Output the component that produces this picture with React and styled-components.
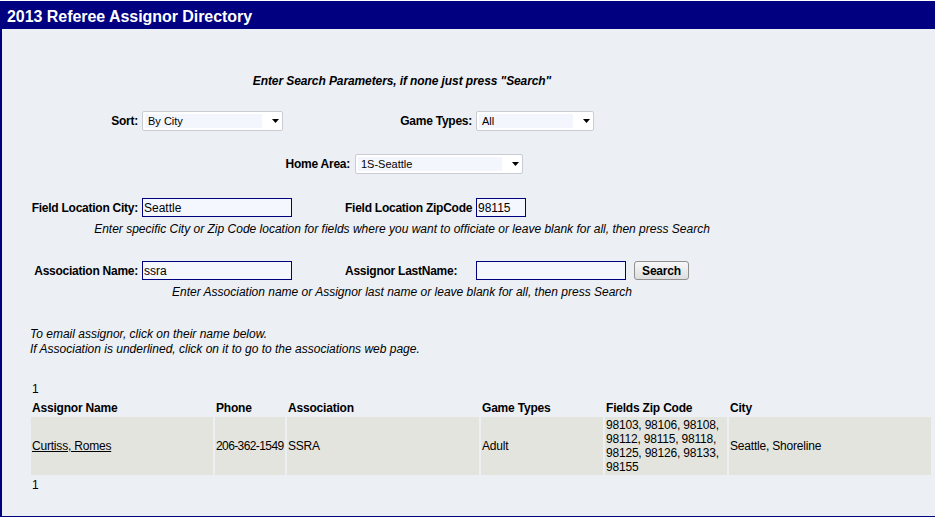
import React from "react";
import styled, { createGlobalStyle } from "styled-components";

const GlobalStyle = createGlobalStyle`
  html, body { margin: 0; padding: 0; overflow: hidden; background: #ffffff; }
  body { padding-top: 1px; font-family: "Liberation Sans", Arial, sans-serif; font-size: 12px; color: #000; }
`;

const resultados = [
  {
    nombre: "Curtiss, Romes",
    telefono: "206-362-1549",
    asociacion: "SSRA",
    tipos: "Adult",
    zips: "98103, 98106, 98108, 98112, 98115, 98118, 98125, 98126, 98133, 98155",
    ciudad: "Seattle, Shoreline",
  },
];

const Select = ({ value, width }) => (
  <SelectBox $width={width}>
    <SelectValue>{value}</SelectValue>
    <SelectArrow>
      <svg width="7" height="4" viewBox="0 0 7 4"><path d="M0 0h7L3.5 4z" fill="#000" /></svg>
    </SelectArrow>
  </SelectBox>
);

const App = () => {
  return (
    <>
      <GlobalStyle />
      <Panel>
        <Header>2013 Referee Assignor Directory</Header>
        <Form>
          <Heading>Enter Search Parameters, if none just press "Search"</Heading>

          <Row $cols="112px 141px 193px 118px" $top={23}>
            <Label $align="right">Sort:</Label>
            <Select value="By City" width={141} />
            <Label $align="right">Game Types:</Label>
            <Select value="All" width={118} />
          </Row>

          <Row $cols="70px 168px" $pad={283} $top={23}>
            <Label $align="right" $gap={5}>Home Area:</Label>
            <Select value="1S-Seattle" width={168} />
          </Row>

          <Row $cols="112px 150px 53px 131px 50px" $top={24}>
            <Label $align="right">Field Location City:</Label>
            <Input defaultValue="Seattle" $width={150} />
            <span />
            <Label>Field Location ZipCode</Label>
            <Input defaultValue="98115" $width={50} />
          </Row>
          <Hint $top={5}>
            Enter specific City or Zip Code location for fields where you want to officiate or leave blank for all, then press Search
          </Hint>

          <Row $cols="112px 150px 53px 131px 150px 8px 55px" $top={25}>
            <Label $align="right">Association Name:</Label>
            <Input defaultValue="ssra" $width={150} />
            <span />
            <Label>Assignor LastName:</Label>
            <Input defaultValue="" $width={150} />
            <span />
            <SearchButton type="button">Search</SearchButton>
          </Row>
          <Hint $top={5}>
            Enter Association name or Assignor last name or leave blank for all, then press Search
          </Hint>
        </Form>

        <Notes>
          To email assignor, click on their name below.<br />
          If Association is underlined, click on it to go to the associations web page.
        </Notes>

        <Table>
          <colgroup>
            <col style={{ width: 182 }} />
            <col style={{ width: 70 }} />
            <col style={{ width: 192 }} />
            <col style={{ width: 122 }} />
            <col style={{ width: 122 }} />
            <col style={{ width: 202 }} />
          </colgroup>
          <tbody>
            <tr><Pager colSpan={6}>1</Pager></tr>
            <tr>
              <Th>Assignor Name</Th>
              <Th>Phone</Th>
              <Th>Association</Th>
              <Th>Game Types</Th>
              <Th>Fields Zip Code</Th>
              <Th>City</Th>
            </tr>
            {resultados.map((r) => (
              <tr key={r.nombre}>
                <Td><NameLink href="#">{r.nombre}</NameLink></Td>
                <Td $nowrap>{r.telefono}</Td>
                <Td>{r.asociacion}</Td>
                <Td>{r.tipos}</Td>
                <Td>{r.zips}</Td>
                <Td>{r.ciudad}</Td>
              </tr>
            ))}
            <tr><Pager colSpan={6}>1</Pager></tr>
          </tbody>
        </Table>
      </Panel>
    </>
  );
};

export default App;

// --- Estilos ---
const Panel = styled.div`
  width: 960px; background: #eceff4;
  border: 2px solid #000080; border-top: none;
  padding-bottom: 21px;
`;

const Header = styled.div`
  height: 28px; background: #000080; color: #fff;
  font-size: 16px; font-weight: 700; line-height: 31px;
  padding-left: 7px; margin: 0 -2px;
  letter-spacing: -0.05px;
`;

const Form = styled.div` width: 800px; `;

const Heading = styled.div`
  margin-top: 45px; text-align: center;
  font-weight: 700; font-style: italic; line-height: 14px;
  letter-spacing: -0.1px;
`;

const Row = styled.div`
  display: grid; grid-template-columns: ${(p) => p.$cols};
  align-items: center; margin-top: ${(p) => p.$top}px;
  padding-left: ${(p) => (p.$pad ?? 28)}px;
`;

const Label = styled.span`
  font-weight: 700; white-space: nowrap; letter-spacing: -0.25px;
  text-align: ${(p) => p.$align || "left"};
  padding-right: ${(p) => (p.$align === "right" ? p.$gap ?? 4 : 0)}px;
`;

const SelectBox = styled.div`
  box-sizing: border-box; width: ${(p) => p.$width}px; height: 20px;
  display: flex; align-items: center;
  border: 1px solid #c9ccd2; border-radius: 2px; background: #fff;
  padding: 2px;
`;

const SelectValue = styled.span`
  flex: 1; height: 14px; line-height: 14px; font-size: 11px;
  background: #f4f6fd; padding-left: 3px;
`;

const SelectArrow = styled.span`
  width: 18px; display: flex; justify-content: flex-end; align-items: center;
  padding-right: 1px; box-sizing: border-box;
`;

const Input = styled.input`
  box-sizing: border-box; width: ${(p) => p.$width}px; height: 19px;
  border: 1px solid #000080; background: #f5f7fe; padding: 0 1px;
  font-family: "Liberation Sans", Arial, sans-serif; font-size: 12px; color: #000;
  outline: none;
`;

const SearchButton = styled.button`
  box-sizing: border-box; width: 55px; height: 19px; padding: 0;
  border: 1px solid #8f8f8f; border-radius: 3px;
  background: linear-gradient(#f7f7f7, #dedede);
  font-family: "Liberation Sans", Arial, sans-serif; font-size: 12px; font-weight: 700; color: #000;
  letter-spacing: -0.2px;
`;

const Hint = styled.div`
  margin-top: ${(p) => p.$top}px; text-align: center;
  font-style: italic; line-height: 14px;
`;

const Notes = styled.div`
  margin: 28px 0 0 28px; font-style: italic; line-height: 15px;
`;

const Table = styled.table`
  margin: 22px 0 0 27px; width: 904px; table-layout: fixed;
  border-collapse: separate; border-spacing: 2px;
  font-size: 12px; letter-spacing: -0.2px;
`;

const Pager = styled.td` padding: 1px; line-height: 14px; `;

const Th = styled.td`
  padding: 2px 1px 0; line-height: 14px; font-weight: 700; white-space: nowrap;
`;

const Td = styled.td`
  background: #e4e4df; padding: 1px; line-height: 14px;
  white-space: ${(p) => (p.$nowrap ? "nowrap" : "normal")};
  letter-spacing: ${(p) => (p.$nowrap ? "-0.6px" : "-0.2px")};
`;

const NameLink = styled.a` color: #000; text-decoration: underline; `;
